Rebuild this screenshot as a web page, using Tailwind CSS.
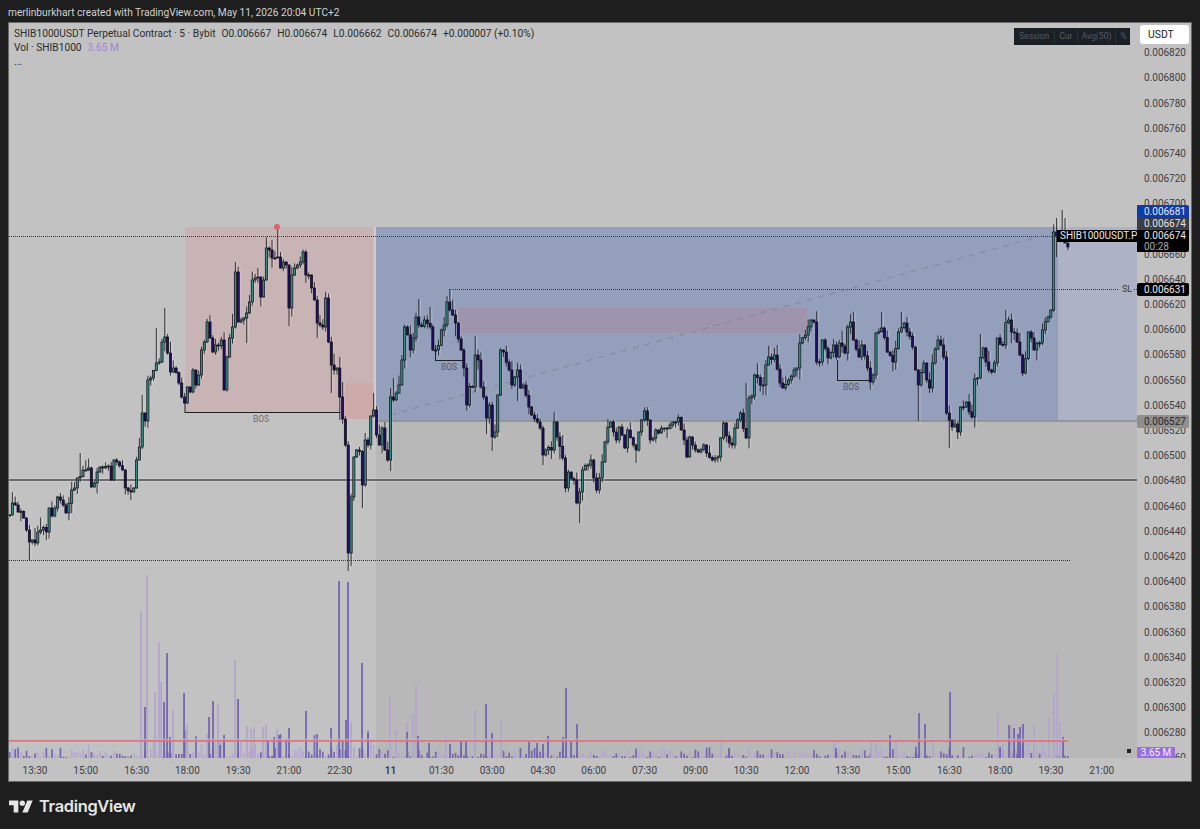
<!DOCTYPE html>
<html>
<head>
<meta charset="utf-8">
<script src="https://cdn.jsdelivr.net/npm/@tailwindcss/browser@4"></script>
</head>
<body class="bg-[#1e1e1e] font-['Roboto','Liberation_Sans',sans-serif]">
<div class="w-[1200px] h-[829px] flex flex-col overflow-hidden">
  <div class="h-[22px] pl-[8px] pt-[6px] text-[10.2px] leading-[13px] text-[#d2d2d2] whitespace-nowrap">merlinburkhart created with TradingView.com, May 11, 2026 20:04 UTC+2</div>
  <div class="mx-[8px] w-[1184px] h-[760px] border border-[#6a6a6a] bg-[#c2c2c2] flex flex-col shrink-0">
    <div class="flex h-[735px]">
      <div class="relative w-[1128px] h-[735px] overflow-hidden">
        <svg id="chart" class="absolute inset-0" width="1128" height="735" viewBox="9 23 1128 735"></svg>
        <div class="absolute left-[5px] top-[4px] text-[10.2px] leading-[14px] text-[#2c2c2c] whitespace-nowrap">
          <div class="flex gap-[6px]"><span>SHIB1000USDT Perpetual Contract · 5 · Bybit</span><span>O0.006667</span><span>H0.006674</span><span>L0.006662</span><span>C0.006674</span><span>+0.000007 (+0.10%)</span></div>
          <div class="flex gap-[6px]"><span>Vol · SHIB1000</span><span class="text-[#a283dc]">3.65 M</span></div>
          <div>...</div>
        </div>
        <div class="absolute left-[1005px] top-[5px] h-[17px] w-[116px] bg-[#1b1f26] flex items-center text-[8.6px] text-[#565b63]">
          <span class="px-[5px] border-r border-[#2c3038]">Session</span><span class="px-[4px] border-r border-[#2c3038]">Cur</span><span class="px-[4px] border-r border-[#2c3038]">Avg(50)</span><span class="px-[4px]">%</span>
        </div>
        <div class="absolute left-[1048px] top-[207px] h-[12px] w-[80px] bg-black text-[#e8e8e8] text-[10px] leading-[12px] pl-[3px] whitespace-nowrap">SHIB1000USDT.P</div>
        <div class="absolute left-[1113px] top-[261px] text-[9px] leading-[10px] text-[#3a3a3a]">SL</div>
        <div class="absolute left-[1118px] top-[726px] w-[4px] h-[4px] bg-[#222]"></div>
      </div>
      <div class="relative flex-1 h-[735px] overflow-hidden text-[10px] text-[#3f4045]">
        <div class="pt-[17.2px] pl-[7px] flex flex-col">
          <div class="h-[25.2px] leading-[25.2px]">0.006820</div>
          <div class="h-[25.2px] leading-[25.2px]">0.006800</div>
          <div class="h-[25.2px] leading-[25.2px]">0.006780</div>
          <div class="h-[25.2px] leading-[25.2px]">0.006760</div>
          <div class="h-[25.2px] leading-[25.2px]">0.006740</div>
          <div class="h-[25.2px] leading-[25.2px]">0.006720</div>
          <div class="h-[25.2px] leading-[25.2px]">0.006700</div>
          <div class="h-[25.2px] leading-[25.2px]">0.006680</div>
          <div class="h-[25.2px] leading-[25.2px]">0.006660</div>
          <div class="h-[25.2px] leading-[25.2px]">0.006640</div>
          <div class="h-[25.2px] leading-[25.2px]">0.006620</div>
          <div class="h-[25.2px] leading-[25.2px]">0.006600</div>
          <div class="h-[25.2px] leading-[25.2px]">0.006580</div>
          <div class="h-[25.2px] leading-[25.2px]">0.006560</div>
          <div class="h-[25.2px] leading-[25.2px]">0.006540</div>
          <div class="h-[25.2px] leading-[25.2px]">0.006520</div>
          <div class="h-[25.2px] leading-[25.2px]">0.006500</div>
          <div class="h-[25.2px] leading-[25.2px]">0.006480</div>
          <div class="h-[25.2px] leading-[25.2px]">0.006460</div>
          <div class="h-[25.2px] leading-[25.2px]">0.006440</div>
          <div class="h-[25.2px] leading-[25.2px]">0.006420</div>
          <div class="h-[25.2px] leading-[25.2px]">0.006400</div>
          <div class="h-[25.2px] leading-[25.2px]">0.006380</div>
          <div class="h-[25.2px] leading-[25.2px]">0.006360</div>
          <div class="h-[25.2px] leading-[25.2px]">0.006340</div>
          <div class="h-[25.2px] leading-[25.2px]">0.006320</div>
          <div class="h-[25.2px] leading-[25.2px]">0.006300</div>
          <div class="h-[25.2px] leading-[25.2px]">0.006280</div>
          <div class="h-[25.2px] leading-[25.2px]">0.006260</div>
        </div>
        <div class="absolute left-[3px] top-[2px] w-[49px] h-[19px] bg-white rounded-[3px] text-[#222] text-[10.4px] leading-[19px] pl-[8px]">USDT</div>
        <div class="absolute left-0 top-[182px] w-[52px] h-[13px] bg-[#0e3ca8] text-[#e4e8f4] rounded-tr-[2px] leading-[13px] pl-[7px]">0.006681</div>
        <div class="absolute left-0 top-[195px] w-[52px] h-[12px] bg-[#3b3e49] text-[#e4e4e4] leading-[12px] pl-[7px]">0.006674</div>
        <div class="absolute left-0 top-[207px] w-[52px] h-[22px] bg-black text-[#e8e8e8] rounded-br-[2px] pl-[7px] leading-[11px]"><div>0.006674</div><div class="text-[#a8a8a8]">00:28</div></div>
        <div class="absolute left-0 top-[260px] w-[52px] h-[13px] bg-black text-[#eeeeee] rounded-[2px] leading-[13px] pl-[7px]">0.006631</div>
        <div class="absolute left-0 top-[392px] w-[52px] h-[13px] bg-[#8f8f8f] text-[#2a2a2a] rounded-[2px] leading-[13px] pl-[7px]">0.006527</div>
        <div class="absolute left-0 top-[724px] w-[38px] h-[12px] bg-[#9a6fdf] text-[#f2ecfc] leading-[12px] text-center">3.65 M</div>
      </div>
    </div>
    <div class="flex h-[24px] pl-[0.6px] text-[10px] leading-[25px] text-[#3f4045] text-center whitespace-nowrap">
      <div class="w-[50.8px]">13:30</div><div class="w-[50.8px]">15:00</div><div class="w-[50.8px]">16:30</div><div class="w-[50.8px]">18:00</div><div class="w-[50.8px]">19:30</div><div class="w-[50.8px]">21:00</div><div class="w-[50.8px]">22:30</div><div class="w-[50.8px] font-bold">11</div><div class="w-[50.8px]">01:30</div><div class="w-[50.8px]">03:00</div><div class="w-[50.8px]">04:30</div><div class="w-[50.8px]">06:00</div><div class="w-[50.8px]">07:30</div><div class="w-[50.8px]">09:00</div><div class="w-[50.8px]">10:30</div><div class="w-[50.8px]">12:00</div><div class="w-[50.8px]">13:30</div><div class="w-[50.8px]">15:00</div><div class="w-[50.8px]">16:30</div><div class="w-[50.8px]">18:00</div><div class="w-[50.8px]">19:30</div><div class="w-[50.8px]">21:00</div>
    </div>
  </div>
  <div class="flex items-center gap-[6px] pl-[9px] pt-[14px] text-[#e6e6e6]">
    <svg width="24" height="13" viewBox="0 4 36 18" fill="currentColor"><path d="M14 22H7V11H0V4h14v18zM28 22h-8l7.5-18h8L28 22z"/><circle cx="20" cy="8" r="4"/></svg>
    <span class="font-['Inter'] text-[16.4px] leading-[20px] font-semibold tracking-[-0.3px]">TradingView</span>
  </div>
</div>
<script>
const P=[[9,515],[12,503],[16,505],[19,512],[23,518],[27,530],[30,542],[33,540],[36,543],[38,532],[41,530],[46,532],[47,513],[50,508],[53,516],[57,497],[61,500],[64,505],[67,513],[71,490],[74,488],[78,478],[82,470],[85,470],[88,468],[91,487],[94,483],[97,472],[102,468],[107,466],[110,472],[112,480],[115,460],[118,462],[122,470],[126,488],[130,492],[134,488],[136,460],[139,447],[142,413],[145,421],[147,380],[151,378],[155,363],[158,362],[161,342],[163,317],[166,337],[168,353],[171,372],[174,368],[178,383],[181,397],[184,403],[187,387],[190,392],[193,370],[197,385],[202,350],[205,342],[207,322],[210,338],[213,352],[217,345],[220,340],[224,390],[227,357],[230,338],[233,327],[235,272],[238,322],[240,320],[243,318],[247,313],[249,302],[251,280],[255,278],[258,277],[260,297],[263,280],[266,248],[269,250],[271,258],[274,258],[277,257],[280,268],[283,262],[286,265],[289,308],[292,275],[294,268],[297,265],[300,262],[304,252],[306,275],[309,275],[311,288],[315,300],[317,323],[321,325],[324,327],[326,298],[328,342],[331,365],[335,370],[338,368],[340,397],[345,445],[348,553],[351,497],[355,457],[358,450],[361,450],[363,485],[365,440],[368,445],[371,416],[374,410],[376,435],[379,445],[381,428],[384,450],[387,460],[391,397],[394,400],[399,385],[403,360],[406,327],[410,350],[413,338],[415,317],[420,325],[425,320],[429,327],[433,350],[437,350],[441,330],[444,325],[447,302],[450,310],[453,315],[456,323],[461,350],[463,368],[468,405],[471,368],[473,387],[476,355],[479,360],[482,387],[487,418],[490,405],[493,437],[496,432],[498,395],[501,350],[504,352],[508,370],[513,385],[517,370],[521,388],[524,385],[528,407],[533,415],[537,422],[541,428],[543,455],[547,450],[551,450],[554,422],[557,437],[562,458],[566,488],[569,472],[573,480],[577,503],[580,492],[582,470],[587,465],[592,460],[595,478],[597,490],[600,478],[603,462],[605,442],[610,422],[613,432],[616,440],[620,427],[625,448],[628,430],[632,445],[635,450],[639,432],[642,420],[646,405],[648,420],[651,440],[655,430],[660,433],[665,428],[670,425],[675,422],[680,417],[682,430],[685,440],[687,457],[691,437],[695,450],[699,452],[704,445],[708,453],[711,460],[714,458],[717,457],[720,438],[724,423],[728,443],[731,445],[735,428],[738,420],[741,413],[745,438],[749,398],[752,396],[755,375],[760,385],[763,385],[766,365],[770,357],[775,355],[780,383],[784,388],[788,380],[794,370],[798,368],[800,343],[805,335],[810,320],[813,322],[817,362],[820,362],[823,340],[828,358],[833,345],[838,363],[840,343],[844,353],[848,327],[851,322],[854,340],[858,357],[863,345],[867,368],[870,382],[873,375],[877,333],[883,328],[888,352],[893,362],[898,332],[903,323],[908,332],[912,347],[916,370],[918,385],[923,363],[926,380],[929,388],[933,363],[937,340],[940,345],[945,357],[947,413],[951,427],[956,424],[958,432],[961,407],[967,402],[971,417],[973,383],[978,378],[982,348],[985,362],[990,370],[993,372],[996,355],[998,338],[1002,345],[1004,322],[1008,320],[1011,332],[1015,333],[1017,342],[1021,355],[1023,373],[1027,350],[1029,332],[1034,350],[1037,343],[1040,343],[1043,330],[1047,317],[1050,310],[1054,232],[1057,236],[1062,232],[1066,243],[1069,247]];
const W=[[29,null,560],[79,453,null],[131,null,500],[142,395,null],[156,328,null],[164,308,null],[236,262,null],[246,null,343],[289,null,326],[277,227,250],[271,240,null],[317,null,338],[331,null,393],[340,357,420],[344,382,null],[348,null,571],[351,null,566],[363,null,508],[374,393,null],[390,388,471],[394,378,null],[419,299,null],[430,307,null],[449,289,null],[476,336,null],[487,null,434],[493,null,451],[517,null,401],[543,null,465],[580,null,523],[613,420,null],[747,383,null],[850,314,null],[882,312,null],[902,312,null],[918,null,421],[950,null,448],[958,null,439],[981,334,null],[1007,310,null],[1057,218,257],[1062,210,233],[1066,218,243],[1069,243,250]];
const VL=[[141,611],[147,575],[155,692],[159,642],[161,682],[173,710],[187,725],[218,704],[235,660],[247,726],[251,729],[254,727],[263,727],[266,725],[277,729],[351,722],[390,696],[396,730],[407,723],[413,715],[416,686],[446,735],[475,711],[501,722],[721,743],[834,740],[871,740],[876,743],[896,739],[933,743],[998,714],[1003,744],[1011,726],[1034,725],[1049,718],[1054,693],[1057,655],[1060,721]];
const VD=[[145,707],[164,702],[167,653],[170,737],[184,693],[209,717],[213,701],[220,745],[224,735],[238,699],[268,740],[274,737],[279,735],[289,728],[306,711],[317,734],[331,728],[339,581],[346,720],[348,582],[362,663],[368,734],[407,732],[418,736],[429,743],[450,744],[461,740],[466,740],[486,704],[492,733],[529,742],[537,743],[543,744],[548,736],[563,737],[566,688],[571,742],[577,724],[729,748],[836,748],[890,735],[916,747],[919,713],[925,724],[950,692],[1000,747],[1009,725],[1014,728],[1018,734],[1020,727],[1023,724],[1063,737]];
let seed=12345;const R=()=>{seed=(seed*1664525+1013904223)%4294967296;return seed/4294967296};
const dx=2.822,x0=35-9*dx,n=376;
function cl(x){let near=null,b=2;for(const p of P){const d=Math.abs(p[0]-x);if(d<b){b=d;near=p}}if(b<=1.41)return near[1];for(let i=0;i<P.length-1;i++){if(P[i][0]<=x&&x<=P[i+1][0]){const t=(x-P[i][0])/(P[i+1][0]-P[i][0]);return P[i][1]+(P[i+1][1]-P[i][1])*t+(R()-.5)*7}}return 515}
let s='';
const rect=(x,y,w,h,f)=>`<rect x="${x}" y="${y}" width="${w}" height="${h}" fill="${f}"/>`;
s+=rect(376,421,761,337,'#b8b8b8');
s+=rect(373.5,227,2.5,194,'#cdcdcd');
s+=rect(185,227,188.5,186,'#c9b4b5');
s+=rect(343,383,30.5,36,'#cda9aa');
s+=rect(376,227,682,194,'#949fbb');
s+=rect(1058,227,79,194,'#adb2c4');
s+=rect(458,308,349,25,'#9e94ad');
const line=(x1,y1,x2,y2,c,w,d)=>`<line x1="${x1}" y1="${y1}" x2="${x2}" y2="${y2}" stroke="${c}" stroke-width="${w}"${d?` stroke-dasharray="${d}"`:''}/>`;
s+=line(376,421,1137,421,'#8b8d92',1.5);
s+=line(9,236.5,1137,236.5,'#33363f',1,'1 1');
s+=line(449,289.5,1118,289.5,'#33363f',1,'1 1');
s+=line(1134,289.5,1137,289.5,'#33363f',1,'1 1');
s+=line(9,560.5,1070,560.5,'#333333',1,'1 1');
s+=line(390,415,1056,232,'#83888f',1,'6 6');
s+=line(9,480,1137,480,'#eaeaea',3.5).replace('/>',' opacity="0.35"/>');
s+=line(9,480,1137,480,'#4a4a4a',1.4);
s+=line(185,412.5,340,412.5,'#222222',1);
s+=line(185,400,185,413,'#222222',1);
s+=line(435,360.5,463,360.5,'#222222',1);
s+=line(435.5,345,435.5,361,'#222222',1);
s+=line(837,380.5,870,380.5,'#222222',1);
s+=line(837.5,360,837.5,381,'#222222',1);
let vols='';let closes=[],prev=515;
for(let i=0;i<n;i++){const x=x0+i*dx;const c=cl(x);closes.push([x,prev,c]);prev=c}
const big=x=>(x>141&&x<375)?22:(x>1000&&x<1068)?12:(x<141)?11:8;
for(const [x,o,c] of closes){const h=1+R()*R()*big(x)*1.5;vols+=rect((x-.8).toFixed(1),(758-h).toFixed(1),1.7,h.toFixed(1),c<o?'#b5a6d3':'#7767b3')}
for(const [x,y] of VL)vols+=rect(x-.8,y,1.7,758-y,'#b3a3d1');
for(const [x,y] of VD)vols+=rect(x-.8,y,1.7,758-y,'#7262b1');
s+=vols;
s+=line(9,739.2,1068,739.2,'#a8cbcf',.8);
s+=line(9,740.8,1068,740.8,'#de7482',1.7);
for(const [x,o,c] of closes){
 const t=Math.min(o,c),b=Math.max(o,c);
 let wt=t-R()*R()*13-.5,wb=b+R()*R()*13+.5;
 for(const w of W){if(Math.abs(w[0]-x)<=1.41){if(w[1]!=null)wt=Math.min(w[1],t);if(w[2]!=null)wb=Math.max(w[2],b)}}
 const up=c<o,xs=x.toFixed(1);
 s+=rect((x+1.2).toFixed(1),(wt).toFixed(1),1.1,(wb-wt).toFixed(1),'#ffffff').replace('/>',' opacity="0.22"/>');
 s+=line(xs,wt.toFixed(1),xs,wb.toFixed(1),'#26262b',.9);
 s+=`<rect x="${(x-1.1).toFixed(1)}" y="${t.toFixed(1)}" width="2.2" height="${Math.max(b-t,1).toFixed(1)}" fill="${up?'#3a8a84':'#200d64'}" stroke="#0c0c14" stroke-width=".7"/>`;
}
s+=`<circle cx="277" cy="227" r="3" fill="#e4626c"/>`;
document.getElementById('chart').innerHTML=s+`<text x="261" y="422" font-size="8.5" text-anchor="middle" fill="#6e6e6e">BOS</text><text x="449" y="370" font-size="8.5" text-anchor="middle" fill="#555a68">BOS</text><text x="851" y="390" font-size="8.5" text-anchor="middle" fill="#555a68">BOS</text>`;
</script>
</body>
</html>
